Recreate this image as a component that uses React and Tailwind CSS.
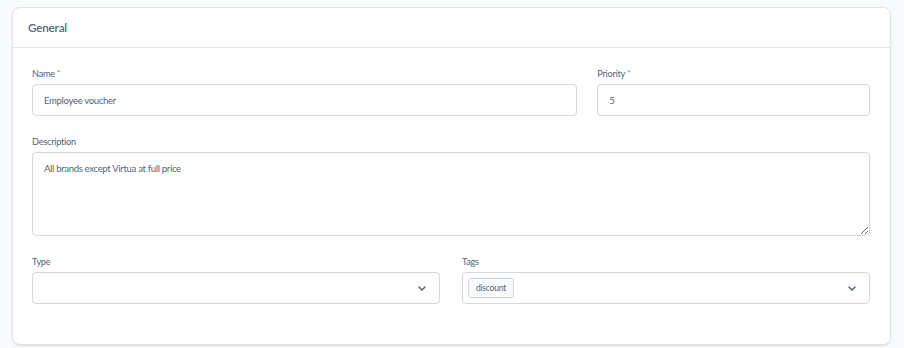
import React from "react";

function Label({ children, required }) {
  return (
    <label className="block h-[12px] text-[9.2px] tracking-[-0.25px] leading-[12px] mb-1 text-[#52667a]">
      {children}
      {required && <span className="text-[#189eff] ml-[2px] text-[8px] align-top leading-[10px]">*</span>}
    </label>
  );
}

function Chevron() {
  return (
    <svg width="8" height="5" viewBox="0 0 8 5" fill="none" className="shrink-0">
      <path d="M1 1l3 3 3-3" stroke="#52667a" strokeWidth="1.5" strokeLinecap="round" strokeLinejoin="round" />
    </svg>
  );
}

export default function App() {
  return (
    <div
      className="min-h-[348px] bg-[#f9fafb] pt-[7px] pl-3 pr-[13px] pb-[2px]"
      style={{ fontFamily: '"Source Sans Pro", Lato, "Noto Sans", sans-serif' }}
    >
      <div className="bg-white border border-[#e0e6eb] rounded-[8px] shadow-[0_1px_2px_rgba(0,0,0,0.12)]">
        <div className="h-[40px] border-b border-[#e0e6eb] flex items-center pl-[15px]">
          <h2 className="text-[11.6px] tracking-[-0.15px] font-semibold text-[#52667a]">General</h2>
        </div>
        <div className="pl-[19px] pr-5 pt-5 pb-[40px] flex flex-col gap-5">
          <div className="grid grid-cols-[2fr_1fr] gap-5">
            <div>
              <Label required>Name</Label>
              <input
                readOnly
                value="Employee voucher"
                className="w-full h-[32px] border border-[#d1d9e0] rounded-[4px] px-[11px] text-[9.5px] tracking-[-0.3px] text-[#52667a] outline-none"
              />
            </div>
            <div>
              <Label required>Priority</Label>
              <input
                readOnly
                value="5"
                className="w-full h-[32px] border border-[#d1d9e0] rounded-[4px] px-[11px] text-[9.5px] tracking-[-0.3px] text-[#52667a] outline-none"
              />
            </div>
          </div>
          <div>
            <Label>Description</Label>
            <textarea
              readOnly
              value="All brands except Virtua at full price"
              className="block w-full h-[84px] border border-[#d1d9e0] rounded-[4px] px-[11px] py-[10px] text-[9.5px] tracking-[-0.3px] leading-[12px] text-[#52667a] outline-none resize-y"
            />
          </div>
          <div className="grid grid-cols-2 gap-[22px]">
            <div>
              <Label>Type</Label>
              <div className="h-[32px] border border-[#d1d9e0] rounded-[4px] flex items-center justify-end pr-[13px]">
                <Chevron />
              </div>
            </div>
            <div>
              <Label>Tags</Label>
              <div className="h-[32px] border border-[#d1d9e0] rounded-[4px] flex items-center justify-between pl-[5px] pr-[13px]">
                <span className="h-[20px] px-[7px] flex items-center bg-[#f9fafb] border border-[#d1d9e0] rounded-[3px] text-[8.6px] tracking-[-0.25px] text-[#52667a]">
                  discount
                </span>
                <Chevron />
              </div>
            </div>
          </div>
        </div>
      </div>
    </div>
  );
}
